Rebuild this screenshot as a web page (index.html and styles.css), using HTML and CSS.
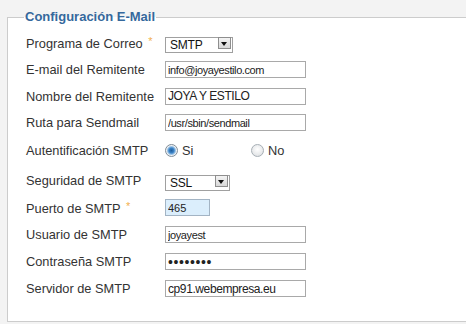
FILE: index.html
```html
<!DOCTYPE html>
<html lang="es">
<head>
    <meta charset="UTF-8">
    <title>Configuración E-Mail</title>
    <link rel="stylesheet" href="styles.css">
</head>
<body>
    <fieldset class="mail-config">
        <legend>Configuración E-Mail</legend>

        <div class="row row-tight">
            <label class="field-label">Programa de Correo <span class="req">*</span></label>
            <div class="select-wrap select-mailer">
                <select class="select-box">
                    <option>SMTP</option>
                </select>
                <span class="select-arrow"></span>
            </div>
        </div>

        <div class="row row-tight">
            <label class="field-label">E-mail del Remitente</label>
            <input class="text-input" type="text" value="info@joyayestilo.com">
        </div>

        <div class="row row-tight">
            <label class="field-label">Nombre del Remitente</label>
            <input class="text-input text-large" type="text" value="JOYA Y ESTILO">
        </div>

        <div class="row row-tight">
            <label class="field-label">Ruta para Sendmail</label>
            <input class="text-input" type="text" value="/usr/sbin/sendmail">
        </div>

        <div class="row row-radio">
            <label class="field-label">Autentificación SMTP</label>
            <div class="radio-group">
                <label class="radio-option"><span class="radio checked"></span>Si</label>
                <label class="radio-option"><span class="radio"></span>No</label>
            </div>
        </div>

        <div class="row">
            <label class="field-label">Seguridad de SMTP</label>
            <div class="select-wrap select-secure">
                <select class="select-box">
                    <option>SSL</option>
                </select>
                <span class="select-arrow"></span>
            </div>
        </div>

        <div class="row">
            <label class="field-label">Puerto de SMTP <span class="req">*</span></label>
            <input class="text-input port-input" type="text" value="465">
        </div>

        <div class="row">
            <label class="field-label">Usuario de SMTP</label>
            <input class="text-input" type="text" value="joyayest">
        </div>

        <div class="row">
            <label class="field-label">Contraseña SMTP</label>
            <input class="text-input password-input" type="password" value="joyayest">
        </div>

        <div class="row">
            <label class="field-label">Servidor de SMTP</label>
            <input class="text-input text-large" type="text" value="cp91.webempresa.eu">
        </div>
    </fieldset>
</body>
</html>
```

FILE: styles.css
```css
* {
    box-sizing: border-box;
}

body {
    margin: 0;
    padding: 9px 0 0 7px;
    background-color: #f3f3f3;
    font-family: "Liberation Sans", Arial, sans-serif;
    color: #333333;
    overflow: hidden;
}

.mail-config {
    margin: 0;
    padding: 5px 0 19px 16px;
    border: 1px solid #cccccc;
    border-right: none;
    background-color: #ffffff;
}

.mail-config legend {
    padding: 0 1px;
    font-size: 13px;
    line-height: 16px;
    font-weight: bold;
    color: #35689c;
}

.row {
    display: flex;
    align-items: center;
    height: 27px;
    padding-left: 2px;
}

.row-tight {
    height: 26.5px;
}

.row-radio {
    height: 28px;
    margin-bottom: 3px;
}

.field-label {
    width: 139px;
    flex-shrink: 0;
    font-size: 12.8px;
}

.req {
    color: #f2b04e;
    font-size: 11px;
    vertical-align: 3px;
    margin-left: 2px;
}

.text-input {
    width: 141px;
    height: 17px;
    margin: 0;
    padding: 0 2px;
    border: 1px solid #a9a9a9;
    background-color: #ffffff;
    font-family: "Liberation Sans", Arial, sans-serif;
    font-size: 11px;
    letter-spacing: -0.4px;
    color: #222222;
    outline: none;
}

.text-large {
    font-size: 12px;
}

.port-input {
    width: 45px;
    background-color: #dbeefc;
    border-color: #a3b4c4;
    letter-spacing: 0;
}

.password-input {
    font-size: 14px;
    letter-spacing: 0.6px;
}

.select-wrap {
    position: relative;
    height: 16px;
}

.select-mailer {
    width: 68px;
}

.select-secure {
    width: 65px;
}

.select-box {
    appearance: none;
    -webkit-appearance: none;
    width: 100%;
    height: 16px;
    margin: 0;
    padding: 0 0 0 4px;
    border: 1px solid #a0a0a0;
    border-radius: 0;
    background-color: #ffffff;
    font-family: "Liberation Sans", Arial, sans-serif;
    font-size: 12px;
    letter-spacing: -0.2px;
    color: #111111;
}

.select-arrow {
    position: absolute;
    top: 2px;
    right: 2px;
    width: 13px;
    height: 12px;
    border: 1px solid #8e8e8e;
    background: linear-gradient(to bottom, #f4f4f4, #d8d8d8);
    pointer-events: none;
}

.select-arrow::after {
    content: "";
    position: absolute;
    left: 2px;
    top: 4px;
    border-left: 3.5px solid transparent;
    border-right: 3.5px solid transparent;
    border-top: 4px solid #111111;
}

.radio-group {
    display: flex;
    align-items: center;
}

.radio-option {
    display: flex;
    align-items: center;
    gap: 4px;
    width: 86px;
    font-size: 12.8px;
}

.radio {
    width: 13px;
    height: 13px;
    border-radius: 50%;
    border: 1px solid #a7afb6;
    background: radial-gradient(circle at 50% 40%, #ffffff 0, #e4e6e8 70%, #cfd3d6 100%);
}

.radio.checked {
    border-color: #7f8c97;
    background: radial-gradient(circle, #1f5d9c 0, #3b84c8 2.5px, #9cc3e6 4px, #eef1f4 5px);
}
```
